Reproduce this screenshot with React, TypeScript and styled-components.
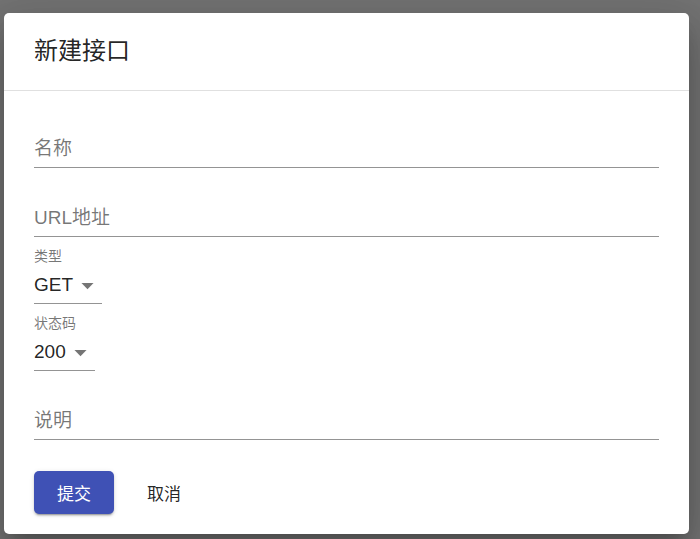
import React from "react";
import styled, { createGlobalStyle } from "styled-components";

const FONT = `"Liberation Sans", Arial, "Noto Sans CJK SC", sans-serif`;

const Global = createGlobalStyle`
  html, body {
    margin: 0;
    padding: 0;
    background: #737373;
    min-height: 539px;
    font-family: ${FONT};
  }
  * { box-sizing: border-box; }
`;

const Backdrop = styled.div`
  display: flex;
  padding: 13px 11px 5px 4px;
  min-height: 539px;
`;

const Dialog = styled.div`
  flex: 1;
  background: #fff;
  border-radius: 5px;
  box-shadow: 0 11px 15px -7px rgba(0, 0, 0, 0.2), 0 24px 38px 3px rgba(0, 0, 0, 0.14),
    0 9px 46px 8px rgba(0, 0, 0, 0.12);
  display: flex;
  flex-direction: column;
`;

const Title = styled.h2`
  margin: 0;
  padding: 19px 29px 20px 30px;
  font-size: 24px;
  line-height: 38px;
  font-weight: 400;
  color: rgba(0, 0, 0, 0.87);
  border-bottom: 1px solid #e0e0e0;
`;

const Content = styled.div`
  display: flex;
  flex-direction: column;
  padding: 39px 30px 20px 30px;
`;

const InputRow = styled.div<{ $mt?: number; $inline?: boolean }>`
  position: relative;
  margin-top: ${(p) => p.$mt ?? 0}px;
  height: 38px;
  display: ${(p) => (p.$inline ? "inline-flex" : "flex")};
  align-self: ${(p) => (p.$inline ? "flex-start" : "stretch")};
  align-items: center;
  border-bottom: 1px solid rgba(0, 0, 0, 0.42);
  padding-right: ${(p) => (p.$inline ? "29px" : "0")};
`;

const TextInput = styled.input`
  border: 0;
  outline: 0;
  padding: 0;
  margin: 0;
  width: 100%;
  background: transparent;
  font-family: ${FONT};
  font-size: 19px;
  color: rgba(0, 0, 0, 0.87);
  &::placeholder {
    color: rgba(0, 0, 0, 0.54);
    opacity: 1;
  }
`;

const SmallLabel = styled.label`
  margin-top: 11px;
  height: 16px;
  line-height: 16px;
  font-size: 14px;
  color: rgba(0, 0, 0, 0.54);
`;

const SelectValue = styled.span`
  font-size: 19px;
  color: rgba(0, 0, 0, 0.87);
`;

const ArrowIcon = styled.svg`
  position: absolute;
  right: 0;
  top: calc(50% - 14px);
  width: 29px;
  height: 29px;
  fill: rgba(0, 0, 0, 0.54);
`;

const Actions = styled.div`
  display: flex;
  gap: 10px;
  margin-top: 31px;
`;

const Button = styled.button<{ $primary?: boolean }>`
  height: 43px;
  padding: 0 23px;
  border: 0;
  border-radius: 5px;
  font-family: ${FONT};
  font-size: 17px;
  cursor: pointer;
  background: ${(p) => (p.$primary ? "#3f51b5" : "transparent")};
  color: ${(p) => (p.$primary ? "#fff" : "rgba(0, 0, 0, 0.87)")};
  box-shadow: ${(p) =>
    p.$primary
      ? "0 3px 1px -2px rgba(0,0,0,0.2), 0 2px 2px 0 rgba(0,0,0,0.14), 0 1px 5px 0 rgba(0,0,0,0.12)"
      : "none"};
`;

const Arrow = () => (
  <ArrowIcon viewBox="0 0 24 24">
    <path d="M7 10l5 5 5-5z" />
  </ArrowIcon>
);

function SelectField({ label, value }: { label: string; value: string }) {
  return (
    <>
      <SmallLabel>{label}</SmallLabel>
      <InputRow $mt={2} $inline>
        <SelectValue>{value}</SelectValue>
        <Arrow />
      </InputRow>
    </>
  );
}

export default function App() {
  return (
    <>
      <Global />
      <Backdrop>
        <Dialog>
          <Title>新建接口</Title>
          <Content>
            <InputRow>
              <TextInput placeholder="名称" />
            </InputRow>
            <InputRow $mt={31}>
              <TextInput placeholder="URL地址" />
            </InputRow>
            <SelectField label="类型" value="GET" />
            <SelectField label="状态码" value="200" />
            <InputRow $mt={31}>
              <TextInput placeholder="说明" />
            </InputRow>
            <Actions>
              <Button $primary>提交</Button>
              <Button>取消</Button>
            </Actions>
          </Content>
        </Dialog>
      </Backdrop>
    </>
  );
}
